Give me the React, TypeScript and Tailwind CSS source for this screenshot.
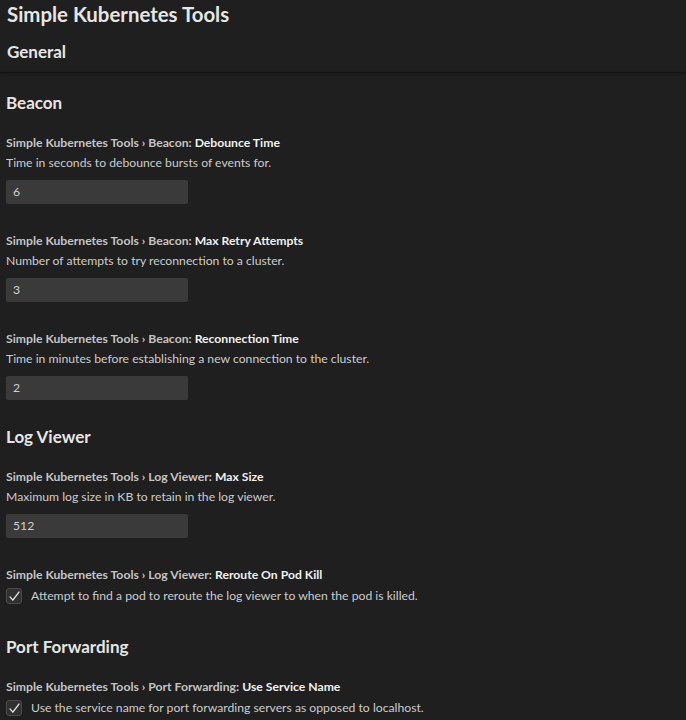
import React from 'react';

type Setting =
  | { kind: 'number'; category: string; name: string; desc: string; value: string }
  | { kind: 'check'; category: string; name: string; desc: string };

const sections: { title: string; items: Setting[] }[] = [
  {
    title: 'Beacon',
    items: [
      { kind: 'number', category: 'Beacon', name: 'Debounce Time', desc: 'Time in seconds to debounce bursts of events for.', value: '6' },
      { kind: 'number', category: 'Beacon', name: 'Max Retry Attempts', desc: 'Number of attempts to try reconnection to a cluster.', value: '3' },
      { kind: 'number', category: 'Beacon', name: 'Reconnection Time', desc: 'Time in minutes before establishing a new connection to the cluster.', value: '2' },
    ],
  },
  {
    title: 'Log Viewer',
    items: [
      { kind: 'number', category: 'Log Viewer', name: 'Max Size', desc: 'Maximum log size in KB to retain in the log viewer.', value: '512' },
      { kind: 'check', category: 'Log Viewer', name: 'Reroute On Pod Kill', desc: 'Attempt to find a pod to reroute the log viewer to when the pod is killed.' },
    ],
  },
  {
    title: 'Port Forwarding',
    items: [
      { kind: 'check', category: 'Port Forwarding', name: 'Use Service Name', desc: 'Use the service name for port forwarding servers as opposed to localhost.' },
    ],
  },
];

const Check = () => (
  <div className="w-4 h-4 shrink-0 rounded-[3px] bg-[#313131] border border-[#4a4a4a] flex items-center justify-center">
    <svg width="13" height="13" viewBox="0 0 16 16" fill="none">
      <path d="M2.5 8.5l3.5 4 7.5-10" stroke="#e4e8ee" strokeWidth="1.6" strokeLinecap="round" strokeLinejoin="round" />
    </svg>
  </div>
);

const SettingItem = ({ s }: { s: Setting }) => (
  <div className={s.kind === 'number' ? 'pb-[27px]' : 'pb-[33px]'}>
    <div className="h-[20px] leading-[20px] text-[12.2px] font-bold text-[#c4c4c4]">
      Simple Kubernetes Tools › {s.category}: <span className="text-[#f0f0f0]">{s.name}</span>
    </div>
    {s.kind === 'number' ? (
      <>
        <div className="h-[20px] leading-[20px] text-[12.2px] text-[#cccccc]">{s.desc}</div>
        <div className="mt-[7px] w-[182px] h-[24px] rounded-[2px] bg-[#3a3a3a] px-[7px] flex items-center text-[12.2px] text-[#d0d0d0]">
          {s.value}
        </div>
      </>
    ) : (
      <div className="mt-[3px] flex items-center gap-[9px] h-[16px]">
        <Check />
        <span className="text-[12.2px] text-[#cccccc] leading-[16px]">{s.desc}</span>
      </div>
    )}
  </div>
);

export default function App() {
  return (
    <div className="w-[686px] h-[720px] overflow-hidden bg-[#1f1f1f]" style={{ fontFamily: 'Lato, "Noto Sans", sans-serif' }}>
      <div className="px-[7px] pt-[2px] h-[28px] leading-[24px] text-[20.4px] font-bold text-[#e6e6e6]">
        Simple Kubernetes Tools
      </div>
      <div className="px-[7px] pt-[12px] h-[44px] leading-[24px] text-[17px] font-bold text-[#e6e6e6]">
        General
      </div>
      <div className="h-[1px] bg-[#141414] shadow-[0_1px_3px_rgba(0,0,0,0.6)]" />
      <div className="px-[6px] pt-[22px] flex flex-col gap-[2px]">
        {sections.map((sec) => (
          <div key={sec.title}>
            <div className="h-[16px] leading-[16px] text-[17px] font-bold text-[#e6e6e6] mb-[22px]">
              {sec.title}
            </div>
            {sec.items.map((s) => (
              <SettingItem key={s.name} s={s} />
            ))}
          </div>
        ))}
      </div>
    </div>
  );
}
